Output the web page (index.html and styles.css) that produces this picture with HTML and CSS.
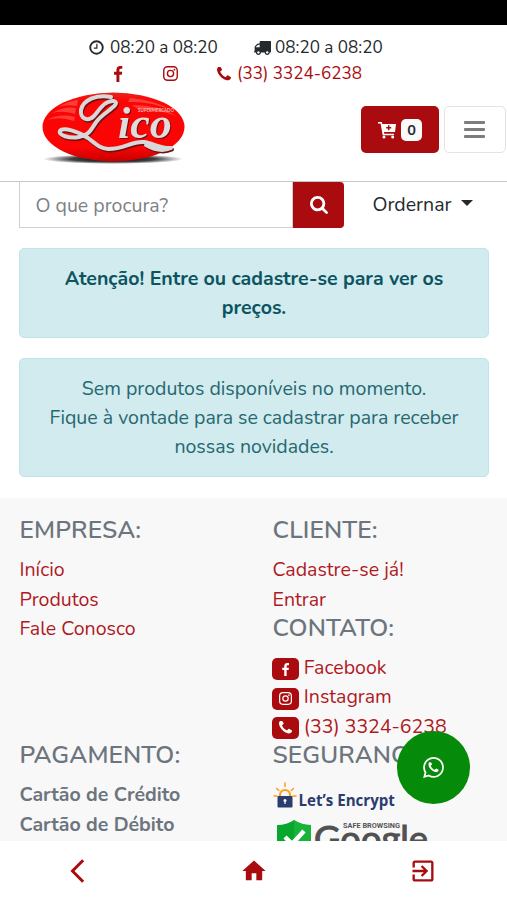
FILE: index.html
```html
<!DOCTYPE html>
<html lang="pt-BR">
<head>
<meta charset="utf-8">
<meta name="viewport" content="width=device-width, initial-scale=1">
<title>Supermercado Lico</title>
<link rel="stylesheet" href="styles.css">
</head>
<body>
<svg class="defs" aria-hidden="true">
  <symbol id="facebook" viewBox="384 0 1024 1664"><path d="M1343 12v264h-157q-86 0-116 36t-30 108v189h293l-39 296h-254v759h-306v-759h-255v-296h255v-218q0-186 104-288.500t277-102.500q147 0 228 12z"/></symbol>
  <symbol id="instagram" viewBox="0 0 16 16"><rect x=".8" y=".8" width="14.400" height="14.400" rx="4" fill="none" stroke="currentColor" stroke-width="1.500"/><circle cx="8" cy="8" r="3.300" fill="none" stroke="currentColor" stroke-width="1.500"/><circle cx="12.200" cy="3.900" r="1"/></symbol>
  <symbol id="phone" viewBox="192 192 1408 1408"><path d="M1600 1240q0 27-10 70.500t-21 68.500q-21 50-122 106-94 51-186 51-27 0-53-3.500t-57.500-12.500-47-14.500-55.500-20.500-49-18q-98-35-175-83-127-79-264-216t-216-264q-48-77-83-175-3-9-18-49t-20.500-55.500-14.500-47-12.500-57.500-3.500-53q0-92 51-186 56-101 106-122 25-11 68.500-21t70.500-10q14 0 21 3 18 6 53 76 11 19 30 54t35 63.500 31 53.500q3 4 17.500 25t21.500 35.500 7 28.500q0 20-28.500 50t-62 55-62 53-28.500 46q0 9 5 22.500t8.500 20.500 14 24 11.500 19q76 137 174 235t235 174q2 1 19 11.500t24 14 20.500 8.500 22.500 5q18 0 46-28.500t53-62 55-62 50-28.500q14 0 28.500 7t35.500 21.500 25 17.500q25 15 53.500 31t63.500 35 54 30q70 35 76 53 3 7 3 21z"/></symbol>
</svg>
<div class="screen">
  <div class="statusbar"></div>
  <header class="header">
    <div class="hours">
      <svg class="icon clock" viewBox="0 0 16 16"><circle cx="8" cy="8" r="6.700" fill="none" stroke="currentColor" stroke-width="2"/><path d="M8.400 4v4.700H5.200" fill="none" stroke="currentColor" stroke-width="1.300"/></svg>
      <span class="time">08:20 a 08:20</span>
      <svg class="icon truck" viewBox="64 256 1728 1408"><path d="M640 1408q0-52-38-90t-90-38-90 38-38 90 38 90 90 38 90-38 38-90zm-384-512h384v-256h-158q-13 0-22 9l-195 195q-9 9-9 22v30zm1280 512q0-52-38-90t-90-38-90 38-38 90 38 90 90 38 90-38 38-90zm256-1088v1024q0 15-4 26.500t-13.500 18.500-16.500 11.500-23.500 6-22.500 2-25.500 0-22.500-.5q0 106-75 181t-181 75-181-75-75-181h-384q0 106-75 181t-181 75-181-75-75-181h-64q-3 0-22.500.5t-25.500 0-22.500-2-23.500-6-16.500-11.500-13.500-18.500-4-26.500q0-26 19-45t45-19v-320q0-8-.5-35t0-38 2.500-34.500 6.500-37 14-30.500 22.500-30l198-198q19-19 50.500-32t58.500-13h160v-192q0-26 19-45t45-19h1024q26 0 45 19t19 45z"/></svg>
      <span class="time">08:20 a 08:20</span>
    </div>
    <div class="social">
      <svg class="icon fb"><use href="#facebook"/></svg>
      <svg class="icon ig"><use href="#instagram"/></svg>
      <svg class="icon tel"><use href="#phone"/></svg>
      <span>(33) 3324-6238</span>
    </div>
    <div class="brandbar">
      <svg class="logo" viewBox="0 0 150 80">
        <defs>
          <radialGradient id="shade"><stop offset="0" stop-color="#000"/><stop offset=".6" stop-color="#000" stop-opacity=".75"/><stop offset="1" stop-color="#000" stop-opacity="0"/></radialGradient>
          <linearGradient id="gloss" x1="0" y1="0" x2="0" y2="1"><stop offset="0" stop-color="#e8251c"/><stop offset=".12" stop-color="#fb0606"/><stop offset=".8" stop-color="#fa0404"/><stop offset="1" stop-color="#c50000"/></linearGradient>
          <path id="swirl" d="M73 6C58 3 45 9 43 19C42 28 50 31 56 25C62 18 67 9 76 10C84 13 66 21 59 30C53 38 52 44 41 46C31 48 20 44 22 40C25 36 40 40 50 47C58 53 61 57 70 58C87 58 93 50 106 51C115 52 122 58 133 57C124 61 115 58 108 54"/>
        </defs>
        <ellipse cx="75" cy="68" rx="70" ry="5" fill="url(#shade)"/>
        <ellipse cx="75.500" cy="36" rx="71" ry="34.500" fill="url(#gloss)"/>
        <g fill="#ff5149" opacity=".75"><path d="M20 16Q30 10 40 9L39 15Q28 13 20 16zM14 22Q27 15 38 17L37 23Q24 19 14 22zM9 29Q22 22 37 26L36 30Q22 25 9 29z"/><path d="M92 7Q117 9 133 19Q112 10 90 11zM94 14Q121 14 139 25Q119 18 100 18z"/></g>
        <g fill="none" stroke-linecap="round" stroke-linejoin="round"><use href="#swirl" x="1" y="1.500" stroke="#701010" stroke-width="4"/><use href="#swirl" stroke="#d9d7d8" stroke-width="4"/></g>
        <text x="80" y="47" class="word">ico</text>
        <text x="100" y="21" class="tiny" textLength="36" lengthAdjust="spacingAndGlyphs">SUPERMERCADO</text>
      </svg>
      <div class="actions">
        <button class="cart"><svg class="carticon" viewBox="0 0 18 18"><path d="M0 1h3.800l.5 2H18l-1 8H6l.2 1.700H16v1.500H4.700L2.600 2.600H0z"/><circle cx="6" cy="16" r="1.500"/><circle cx="14.700" cy="16" r="1.500"/><path d="M10.700 4.300v5M8.200 6.800h5" stroke="#a90b0e" stroke-width="1.500"/></svg><span class="count">0</span></button>
        <button class="menu"><i></i><i></i><i></i></button>
      </div>
    </div>
  </header>
  <main class="content">
    <div class="tools">
      <div class="field">O que procura?</div>
      <button class="search"><svg viewBox="64 128 1664 1664"><path d="M1216 832q0-185-131.500-316.500t-316.500-131.500-316.500 131.500-131.500 316.500 131.500 316.500 316.500 131.500 316.500-131.500 131.500-316.500zm512 832q0 52-38 90t-90 38q-54 0-90-38l-343-342q-179 124-399 124-143 0-273.500-55.500t-225-150-150-225-55.500-273.500 55.500-273.500 150-225 225-150 273.500-55.500 273.500 55.500 225 150 150 225 55.500 273.500q0 220-124 399l343 343q37 37 37 90z"/></svg></button>
      <div class="sort"><span>Ordernar</span><i class="caret"></i></div>
    </div>
    <div class="alert strong">Atenção! Entre ou cadastre-se para ver os<br>preços.</div>
    <div class="alert">Sem produtos disponíveis no momento.<br>Fique à vontade para se cadastrar para receber<br>nossas novidades.</div>
    <footer class="footer">
      <section>
        <h2>EMPRESA:</h2>
        <a>Início</a><a>Produtos</a><a>Fale Conosco</a>
      </section>
      <section>
        <h2>CLIENTE:</h2>
        <a>Cadastre-se já!</a><a>Entrar</a>
        <h2>CONTATO:</h2>
        <a class="contact"><span class="badge"><svg><use href="#facebook"/></svg></span>Facebook</a>
        <a class="contact"><span class="badge"><svg><use href="#instagram"/></svg></span>Instagram</a>
        <a class="contact"><span class="badge"><svg><use href="#phone"/></svg></span>(33) 3324-6238</a>
      </section>
      <section>
        <h2>PAGAMENTO:</h2>
        <p>Cartão de Crédito</p><p>Cartão de Débito</p>
      </section>
      <section>
        <h2>SEGURANÇA:</h2>
        <div class="encrypt">
          <svg viewBox="0 0 24 26"><g fill="none" stroke="#f8a01c" stroke-width="1.500" stroke-linecap="round"><path d="M1 14h3M20 14h3M3.500 6.500l2.300 2M20.500 6.500l-2.300 2M12 1v3.500"/><path d="M7 15v-2a5 5 0 0 1 10 0v2" stroke-width="2.200"/></g><rect x="4.500" y="14" width="15" height="11.500" rx="1" fill="#2b3c6e"/><circle cx="12" cy="18.500" r="1.500" fill="#fff"/><path d="M12 18v4" stroke="#fff" stroke-width="1.200"/></svg>
          <span>Let’s Encrypt</span>
        </div>
        <div class="safe">
          <svg viewBox="0 0 160 46"><path d="M4 5Q14 5 21 0Q28 5 38 5V25Q35 36 21 42Q7 36 4 25z" fill="#07a62c"/><path d="M21 0Q28 5 38 5V25Q35 36 21 42z" fill="#18b43a"/><path d="M12 17l7 7 12-13" fill="none" stroke="#fff" stroke-width="4.500"/><text x="41" y="32" class="google" textLength="114" lengthAdjust="spacingAndGlyphs">Google</text><text x="70" y="7.500" class="browsing" textLength="57" lengthAdjust="spacingAndGlyphs">SAFE BROWSING</text></svg>
        </div>
      </section>
    </footer>
  </main>
  <nav class="navbar">
    <svg viewBox="0 0 24 24"><path d="M17.300 3.700L15.500 2 5.500 12l10 10 1.800-1.700L9 12z"/></svg>
    <svg viewBox="0 0 24 24"><path d="M10 20v-6h4v6h5v-8h3L12 3 2 12h3v8z"/></svg>
    <svg viewBox="0 0 24 24"><path d="M10.090 15.590L11.500 17l5-5-5-5-1.410 1.410L12.670 11H3v2h9.670l-2.580 2.590zM19 3H5c-1.110 0-2 .9-2 2v4h2V5h14v14H5v-4H3v4c0 1.100.89 2 2 2h14c1.100 0 2-.9 2-2V5c0-1.100-.9-2-2-2z"/></svg>
  </nav>
  <a class="whatsapp"><svg viewBox="0 0 24 24"><path fill-rule="evenodd" d="M12.040 2C6.580 2 2.130 6.450 2.130 11.910C2.130 13.660 2.590 15.360 3.450 16.860L2.050 22L7.300 20.620C8.750 21.410 10.380 21.830 12.040 21.830C17.500 21.830 21.950 17.380 21.950 11.920C21.950 9.270 20.920 6.780 19.050 4.910C17.180 3.030 14.690 2 12.040 2M12.050 3.670C14.250 3.670 16.310 4.530 17.870 6.090C19.420 7.650 20.280 9.720 20.280 11.920C20.280 16.460 16.580 20.150 12.040 20.150C10.560 20.150 9.110 19.760 7.850 19L7.550 18.830L4.430 19.650L5.260 16.610L5.060 16.290C4.240 15 3.800 13.470 3.800 11.910C3.810 7.370 7.500 3.670 12.050 3.670"/><use href="#phone" x="7" y="7" width="10" height="10"/></svg></a>
</div>
</body>
</html>
```
FILE: styles.css
```css
* { box-sizing: border-box; }
body { margin: 0; font-family: Nunito, Lato, "Noto Sans", sans-serif; font-size: 19.55px; line-height: 29.33px; color: #25292d; background: #fff; }
svg { display: block; fill: currentColor; }
.defs { display: none; }
button { padding: 0; font: inherit; border: 0; }
.screen { position: relative; display: flex; flex-direction: column; height: 900px; overflow: hidden; }
.statusbar { flex: none; height: 25px; background: #000; }
.header { flex: none; height: 157px; border-bottom: 1px solid #c5c7c9; }
.hours, .social { display: flex; align-items: center; font-size: 17.100px; white-space: nowrap; }
.hours { height: 26px; margin-top: 10px; padding-left: 89px; }
.social { height: 26px; padding-left: 113px; color: #a90b0e; }
.icon { flex: none; margin-top: -1px; }
.clock { width: 15px; height: 15px; margin-right: 6px; }
.time { width: 108px; }
.truck { width: 17px; height: 14px; margin: 0 4px 0 36px; }
.fb { width: 10px; height: 16px; }
.ig { width: 15px; height: 15px; margin-left: 40px; }
.tel { width: 14px; height: 14px; margin: -1px 6px 0 39px; }
.brandbar { display: flex; justify-content: space-between; margin-top: 4px; padding-left: 38px; }
.logo { width: 150px; height: 80px; overflow: visible; }
.word { font: italic bold 44px "Liberation Serif", serif; fill: #dedcdd; filter: drop-shadow(1px 1.500px 0 #701010); }
.tiny { font: bold 6px Lato, sans-serif; fill: #f3b5b2; }
.actions { display: flex; gap: 5px; padding: 15px 1px 0 0; }
.cart { display: flex; align-items: center; width: 78px; height: 47px; padding-left: 17px; gap: 5px; border-radius: 5px; background: #a90b0e; color: #fff; }
.carticon { width: 18px; height: 18px; }
.count { width: 21px; height: 22px; border-radius: 5px; background: #fafafa; color: #25292d; font-size: 14.500px; font-weight: 700; line-height: 22px; text-align: center; }
.menu { display: flex; flex-direction: column; align-items: center; justify-content: center; gap: 4px; width: 62px; height: 47px; padding-right: 2px; border: 1px solid #e3e3e3; border-radius: 5px; background: #fff; }
.menu i { width: 21px; height: 3px; border-radius: 1px; background: #7d7d7d; }
.content { flex: 1; min-height: 0; overflow: hidden; }
.tools { display: flex; height: 46px; margin: 0 19px; }
.field { width: 274px; padding-left: 15.500px; border: 1px solid #ced0d2; border-top: 0; line-height: 47px; color: #7d8185; }
.search { display: grid; place-items: center; width: 51px; border-radius: 0 4px 4px 0; background: #a90b0e; color: #fff; }
.search svg { width: 18px; height: 18px; }
.sort { display: flex; align-items: center; gap: 9px; margin-left: 28.500px; }
.caret { border: 6px solid transparent; border-top-color: #25292d; border-bottom: 0; margin-top: -4px; }
.alert { margin: 20px 18px 0 19px; padding: 14.600px 0; border: 1px solid #bee5eb; border-radius: 5px; background: #d1ebef; color: #26686f; text-align: center; white-space: nowrap; }
.alert + .alert { margin-top: 20.200px; }
.strong { color: #0c5460; font-weight: 700; }
.footer { display: grid; grid-template-columns: 253px 1fr; margin-top: 20.300px; padding: 18.700px 0 0 19.500px; background: #f8f8f9; white-space: nowrap; }
h2 { margin: 0 0 9.800px; font-size: 24.440px; line-height: 29.330px; font-weight: 600; letter-spacing: .12px; color: #6c757d; }
.footer a { display: block; color: #b01a1f; }
.footer p { margin: 0; color: #6c757d; font-weight: 700; }
.footer .contact { display: flex; align-items: center; gap: 5px; margin-left: -.7px; }
.badge { display: grid; place-items: center; width: 27px; height: 22px; margin-top: 3px; border-radius: 5px; background: #a90b0e; color: #fff; }
.badge svg { width: 13px; height: 13px; }
.encrypt { display: flex; align-items: flex-end; gap: 2px; height: 28px; color: #2b3c6e; font: 700 15.100px/16px "Open Sans", sans-serif; }
.encrypt svg { width: 24px; height: 26px; }
.safe { padding-top: 11.500px; }
.safe svg { width: 160px; height: 46px; overflow: visible; }
.google { font: 36px Lato, sans-serif; fill: #515151; stroke: #515151; }
.browsing { font: bold 8px Roboto, sans-serif; fill: #555; }
.navbar { position: relative; flex: none; display: flex; justify-content: space-between; height: 59px; padding: 16px 70px 0 64px; background: #fff; color: #a90b0e; }
.navbar svg { width: 28px; height: 28px; }
.navbar svg:nth-child(2) { margin-left: 6px; }
.whatsapp { position: absolute; left: 397px; top: 731px; display: grid; place-items: center; width: 73px; height: 73px; border-radius: 50%; background: #058a0a; color: #fff; }
.whatsapp svg { width: 25px; height: 25px; }
```
